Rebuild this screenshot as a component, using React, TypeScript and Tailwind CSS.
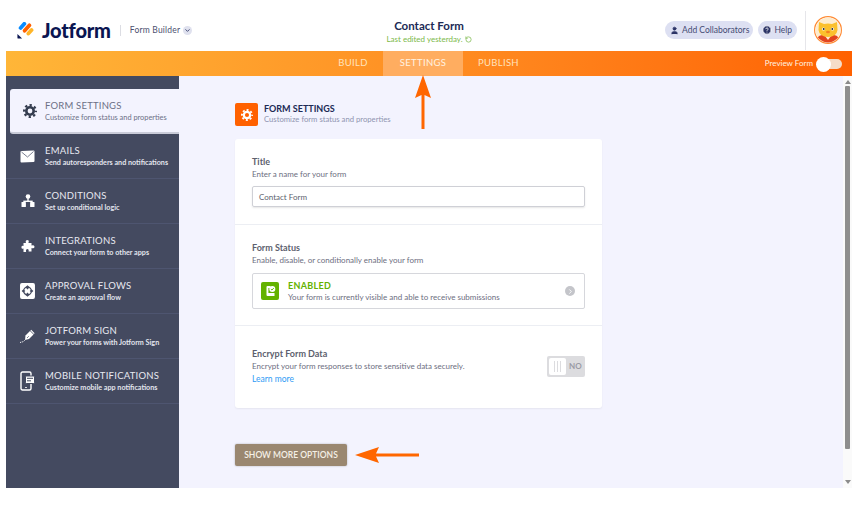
import React from "react";
import { User, CircleHelp, ChevronDown, ChevronRight, RotateCcw } from "lucide-react";

const sans = "font-['Lato','Liberation_Sans',sans-serif]";

const Logo = () => (
  <svg width="17" height="17" viewBox="0 0 20 20">
    <rect x="4.2" y="-1" width="4.5" height="11" rx="2.2" fill="#0a8cff" transform="rotate(42 6.4 4.5)" />
    <rect x="9.6" y="0.6" width="4.5" height="13" rx="2.2" fill="#ff6100" transform="rotate(42 11.8 7)" />
    <rect x="13" y="6.5" width="4.5" height="10" rx="2.2" fill="#ffb629" transform="rotate(42 15.2 11.5)" />
    <path d="M0.5 14 L0.5 18.5 Q0.5 19.5 1.5 19.5 L6 19.5 Z" fill="#0a1551" />
  </svg>
);

const Avatar = () => (
  <svg width="28" height="28" viewBox="0 0 28 28">
    <defs>
      <clipPath id="avatarClip">
        <circle cx="14" cy="14" r="12.5" />
      </clipPath>
    </defs>
    <circle cx="14" cy="14" r="13.4" fill="#fff" stroke="#ff8a33" strokeWidth="1.2" />
    <g clipPath="url(#avatarClip)">
      <rect width="28" height="28" fill="#fdeccf" />
      <path d="M1 28 Q2 20 8 19 L20 19 Q26 20 27 28Z" fill="#e2431e" />
      <path d="M11 20 L14 24 L17 20Z" fill="#fdeccf" />
      <path d="M5 6 L10 8 Q14 7 18 8 L23 6 L23.5 14 Q22.5 21 14 21 Q5.5 21 4.5 14Z" fill="#fbc02d" />
      <circle cx="9.5" cy="13" r="1.6" fill="#fff" />
      <circle cx="18.5" cy="13" r="1.6" fill="#fff" />
      <circle cx="9.7" cy="13" r="1" fill="#2b2b2b" />
      <circle cx="18.3" cy="13" r="1" fill="#2b2b2b" />
      <ellipse cx="14" cy="16" rx="2" ry="1.3" fill="#f5811f" />
    </g>
  </svg>
);

const Gear = ({ size, color }: { size: number; color: string }) => (
  <svg width={size} height={size} viewBox="0 0 14 14" fill="none">
    <circle cx="7" cy="7" r="3.7" stroke={color} strokeWidth="2.6" />
    <circle cx="7" cy="7" r="5.9" stroke={color} strokeWidth="2.2" strokeDasharray="2.3 2.33" strokeDashoffset="1.15" />
  </svg>
);

const MailIcon = () => (
  <svg width="15" height="13" viewBox="0 0 15 13">
    <path d="M0.5 2 Q0.5 1 1.5 1 L13.5 0.5 Q14.5 0.5 14.5 1.5 L14.5 11 Q14.5 12 13.5 12 L1.5 12.5 Q0.5 12.5 0.5 11.5Z" fill="#fff" />
    <path d="M1.5 2 L7.5 7 L13.5 1.5" fill="none" stroke="#6b7085" strokeWidth="0.9" />
  </svg>
);

const ConditionsIcon = () => (
  <svg width="14" height="14" viewBox="0 0 14 14" fill="#fff">
    <circle cx="7" cy="2.5" r="2.3" />
    <rect x="6.3" y="4" width="1.4" height="4" />
    <rect x="2.3" y="6.6" width="9.4" height="1.4" />
    <rect x="0.5" y="8" width="4.4" height="5" rx="0.6" />
    <rect x="9.1" y="8" width="4.4" height="5" rx="0.6" />
  </svg>
);

const PuzzleIcon = () => (
  <svg width="14" height="14" viewBox="0 0 14 14" fill="#fff">
    <path d="M2.5 4 H5 Q4 1.6 6 1 Q8.4 1 7.6 3.2 L7.4 4 H10.5 V6.6 Q12.8 5.6 13.5 7.4 Q13.6 9.6 11.2 9.2 L10.5 9 V12.4 H7.6 Q8.4 10.4 6.4 10 Q4.4 10.2 5 12.4 L5.2 13 H2.5 V9.6 Q0.5 10.2 0.4 8.2 Q0.6 6.2 2.5 7Z" />
  </svg>
);

const ApprovalIcon = () => (
  <svg width="15" height="16" viewBox="0 0 14 15">
    <rect width="14" height="15" rx="1.8" fill="#fff" />
    <circle cx="7" cy="7.5" r="3.6" fill="none" stroke="#444a60" strokeWidth="1.2" />
    <path d="M7 2 L9 4 L7 6 L5 4Z M3 6 L5 7.5 L3 9 L1.5 7.5Z M11 6 L12.5 7.5 L11 9 L9 7.5Z M7 9 L9 11 L7 13 L5 11Z" fill="#444a60" />
  </svg>
);

const SignIcon = () => (
  <svg width="15" height="15" viewBox="0 0 15 15" fill="none">
    <path d="M5.5 6.5 L10 2 L13.5 5.5 L9 10 L5 11Z" fill="#fff" />
    <path d="M10.8 1.2 L14.2 4.6" stroke="#fff" strokeWidth="1.2" />
    <path d="M7 9 L8.8 7.2" stroke="#444a60" strokeWidth="0.7" />
    <path d="M4.8 11.2 Q3 13.4 1 12.8 Q0.4 12.8 0.5 14" stroke="#fff" strokeWidth="0.9" strokeDasharray="1.4 0.8" />
  </svg>
);

const MobileIcon = () => (
  <svg width="15" height="20" viewBox="0 0 15 20" fill="none">
    <rect x="1" y="1" width="10" height="18" rx="1.5" stroke="#fff" strokeWidth="1.4" />
    <rect x="5.5" y="5" width="9" height="7.5" rx="1" fill="#fff" stroke="#444a60" />
    <path d="M7 7.3 H13 M7 9.8 H11" stroke="#444a60" />
    <path d="M5.2 16.5 H6.8" stroke="#fff" />
  </svg>
);

const navItems = [
  { title: "EMAILS", sub: "Send autoresponders and notifications", icon: <MailIcon /> },
  { title: "CONDITIONS", sub: "Set up conditional logic", icon: <ConditionsIcon /> },
  { title: "INTEGRATIONS", sub: "Connect your form to other apps", icon: <PuzzleIcon /> },
  { title: "APPROVAL FLOWS", sub: "Create an approval flow", icon: <ApprovalIcon /> },
  { title: "JOTFORM SIGN", sub: "Power your forms with Jotform Sign", icon: <SignIcon /> },
  { title: "MOBILE NOTIFICATIONS", sub: "Customize mobile app notifications", icon: <MobileIcon /> },
];

function Sidebar() {
  return (
    <aside className="w-[173px] shrink-0 bg-[#444a60] pt-[13px] overflow-hidden">
      <div className="ml-[4px] h-[45px] bg-[#f3f3fe] rounded-l-[3px] flex items-center border-b-2 border-[#c9cbd8]">
        <div className="w-[35px] flex justify-center shrink-0 pl-[4px]">
          <Gear size={14} color="#343c4f" />
        </div>
        <div className="mt-[1px]">
          <div className="text-[9.5px] leading-[12px] tracking-[0.2px] text-[#6c7086]">FORM SETTINGS</div>
          <div className="text-[7.4px] leading-[11px] text-[#6c7086] whitespace-nowrap">Customize form status and properties</div>
        </div>
      </div>
      {navItems.map((item) => (
        <div key={item.title} className="h-[45px] flex items-center border-b border-[#4e5570] text-white">
          <div className="w-[39px] pl-[4px] flex justify-center shrink-0">{item.icon}</div>
          <div className="mt-[1px]">
            <div className="text-[9.5px] leading-[12px] tracking-[0.25px] text-[#e8e9f1]">{item.title}</div>
            <div className="text-[7.2px] leading-[11px] font-bold text-[#e3e5ee] whitespace-nowrap">{item.sub}</div>
          </div>
        </div>
      ))}
    </aside>
  );
}

function Card() {
  return (
    <div className="w-[367px] bg-white rounded-[3px] shadow-[0_1px_2px_rgba(0,0,0,0.06)] mt-[13px] text-[#6c6e80]">
      <section className="h-[86px] px-[17px] pt-[17px] border-b border-[#eceef3]">
        <div className="text-[9px] leading-[11px] font-bold text-[#5d5f6e]">Title</div>
        <div className="text-[8px] leading-[11px] mt-[2px]">Enter a name for your form</div>
        <div className="mt-[6px] h-[21px] border border-[#cfd0d6] rounded-[2px] shadow-[0_1px_2px_rgba(0,0,0,0.1)] flex items-center px-[6px] text-[8px] text-[#5d5f6e]">
          Contact Form
        </div>
      </section>
      <section className="h-[101px] px-[17px] pt-[17px] border-b border-[#eceef3]">
        <div className="text-[9px] leading-[11px] font-bold text-[#5d5f6e]">Form Status</div>
        <div className="text-[8px] leading-[11px] mt-[2px]">Enable, disable, or conditionally enable your form</div>
        <div className="mt-[7px] h-[36px] border border-[#d6d7dc] rounded-[2px] flex items-center pl-[8px] pr-[9px]">
          <div className="w-[18px] h-[18px] rounded-[2px] bg-[#64b200] flex items-center justify-center">
            <svg width="11" height="12" viewBox="0 0 11 12" fill="none">
              <path d="M1.5 2 Q1.5 1 2.5 1 H5.5 V3 H3.4 V8 H9.5 V11 H2.5 Q1.5 11 1.5 10Z" fill="#fff" />
              <circle cx="7.3" cy="4" r="3" fill="#fff" />
              <path d="M5.9 4 L7 5.1 L8.8 3" stroke="#64b200" strokeWidth="0.9" />
            </svg>
          </div>
          <div className="ml-[9px] flex-1">
            <div className="text-[9px] leading-[11px] font-bold tracking-[0.3px] text-[#64b200]">ENABLED</div>
            <div className="text-[8px] leading-[10px] mt-[1px] whitespace-nowrap">Your form is currently visible and able to receive submissions</div>
          </div>
          <div className="w-[10px] h-[10px] rounded-full bg-[#c4c5ca] flex items-center justify-center">
            <ChevronRight size={7} color="#fff" strokeWidth={3} />
          </div>
        </div>
      </section>
      <section className="h-[82px] px-[17px] flex items-center justify-between">
        <div className="-mt-[1px]">
          <div className="text-[9px] leading-[12px] font-bold text-[#5d5f6e]">Encrypt Form Data</div>
          <div className="text-[8px] leading-[12px]">Encrypt your form responses to store sensitive data securely.</div>
          <div className="text-[8.5px] leading-[14px] text-[#2f9bf5]">Learn more</div>
        </div>
        <div className="w-[38px] h-[21px] bg-[#dcdcdf] rounded-[2px] flex items-center pl-[2px] -mt-[2px]">
          <div className="w-[17px] h-[17px] bg-white rounded-[2px] flex items-center justify-center gap-[2px]">
            <span className="w-px h-[11px] bg-[#dcdcdf]" />
            <span className="w-px h-[11px] bg-[#dcdcdf]" />
            <span className="w-px h-[11px] bg-[#dcdcdf]" />
          </div>
          <span className="ml-[3px] text-[8px] font-bold text-[#9a9aa5]">NO</span>
        </div>
      </section>
    </div>
  );
}

export default function App() {
  return (
    <div className={`relative w-[855px] h-[507px] overflow-hidden bg-white ${sans}`}>
      <header className="h-[51px] flex items-center pl-[17px] pr-[13px] pt-[9px] relative">
        <Logo />
        <span className="ml-[8px] text-[20px] font-black tracking-[-0.2px] text-[#0a1551]">Jotform</span>
        <span className="ml-[9px] w-px h-[11px] bg-[#dcdde3]" />
        <span className="ml-[9px] text-[8.5px] tracking-[0.2px] text-[#4c5070]">Form Builder</span>
        <span className="ml-[3px] w-[9px] h-[9px] rounded-full bg-[#dfe1ee] flex items-center justify-center">
          <ChevronDown size={7} color="#343c6a" strokeWidth={3} />
        </span>
        <div className="absolute left-0 right-0 top-[18px] flex flex-col items-center pl-[3px]">
          <div className="text-[11.5px] leading-[15px] font-bold text-[#202a55]">Contact Form</div>
          <div className="mt-[1px] text-[8px] leading-[11px] text-[#7cb94a] flex items-center gap-[2px]">
            Last edited yesterday.
            <RotateCcw size={7} color="#7cb94a" strokeWidth={2.5} />
          </div>
        </div>
        <div className="ml-auto flex items-center">
          <span className="h-[18px] pl-[5px] pr-[4px] rounded-full bg-[#dde0f2] text-[#454b72] text-[8.5px] flex items-center gap-[3px]">
            <User size={9} color="#2b3366" fill="#2b3366" />
            Add Collaborators
          </span>
          <span className="ml-[5px] h-[18px] pl-[4px] pr-[5px] rounded-full bg-[#dde0f2] text-[#454b72] text-[8.5px] flex items-center gap-[2px]">
            <CircleHelp size={10} color="#fff" fill="#2b3366" />
            Help
          </span>
          <span className="ml-[8px] w-px h-[39px] bg-[#e6e6ea]" />
          <span className="ml-[8px]"><Avatar /></span>
        </div>
      </header>

      <div className="mx-[6px] w-[846px]">
        <nav className="h-[25px] bg-gradient-to-r from-[#ffb638] to-[#ff6100] flex items-center relative">
          <div className="ml-[317px] flex h-full items-center text-[9.5px] tracking-[0.3px]">
            <span className="w-[60px] text-center text-[#ffe3bd]">BUILD</span>
            <span className="w-[80px] h-full flex items-center justify-center bg-[#ffad60] text-[#fff3e2]">SETTINGS</span>
            <span className="w-[71px] text-center text-[#ffe3bd]">PUBLISH</span>
          </div>
          <div className="ml-auto flex items-center pr-[10px]">
            <span className="text-[8px] -mt-[1px] text-[#fff1e0]">Preview Form</span>
            <span className="relative ml-[4px] w-[25px] h-[10px] rounded-full bg-[#f5dcc8]">
              <span className="absolute -left-[1px] -top-[2px] w-[15px] h-[15px] rounded-full bg-white" />
            </span>
          </div>
        </nav>

        <main className="h-[412px] flex bg-[#f3f3fe] relative">
          <Sidebar />
          <div className="flex-1 pl-[56px] pt-[27px]">
            <div className="flex items-center h-[23px]">
              <div className="w-[23px] h-[23px] rounded-[2px] bg-[#ff6100] flex items-center justify-center">
                <Gear size={12} color="#fff" />
              </div>
              <div className="ml-[6px] -mt-[2px]">
                <div className="text-[9px] leading-[11px] font-bold text-[#202a55]">FORM SETTINGS</div>
                <div className="text-[7.7px] leading-[11px] text-[#8f93b0] whitespace-nowrap">Customize form status and properties</div>
              </div>
            </div>
            <Card />
            <button className="mt-[36px] w-[112px] h-[22px] rounded-[2px] bg-[#9a8770] text-[#f5f0e6] text-[8.5px] font-semibold shadow-[0_0_2px_rgba(0,0,0,0.3)]">
              SHOW MORE OPTIONS
            </button>
          </div>
          <div className="w-[9px] bg-[#fafafa] relative flex flex-col items-center">
            <span className="mt-[4px] w-0 h-0 border-x-[3px] border-x-transparent border-b-[4px] border-b-[#8b8b8b]" />
            <span className="mt-[2px] w-[5px] h-[363px] bg-[#8e8e8e] rounded-[1px]" />
            <span className="mt-auto mb-[4px] w-0 h-0 border-x-[3px] border-x-transparent border-t-[4px] border-t-[#8b8b8b]" />
          </div>
        </main>
      </div>

      {/* annotation arrows */}
      <svg className="absolute left-[410px] top-[74px]" width="26" height="56" viewBox="0 0 26 56">
        <path d="M13 1 L21 24 L14.5 21 L14.5 55 L11.5 55 L11.5 21 L5 24 Z" fill="#ff6600" />
      </svg>
      <svg className="absolute left-[354px] top-[444px]" width="66" height="22" viewBox="0 0 66 22">
        <path d="M1 11 L25 3 L22 9.5 L65 9.5 L65 12.5 L22 12.5 L25 19 Z" fill="#ff6600" />
      </svg>
    </div>
  );
}
